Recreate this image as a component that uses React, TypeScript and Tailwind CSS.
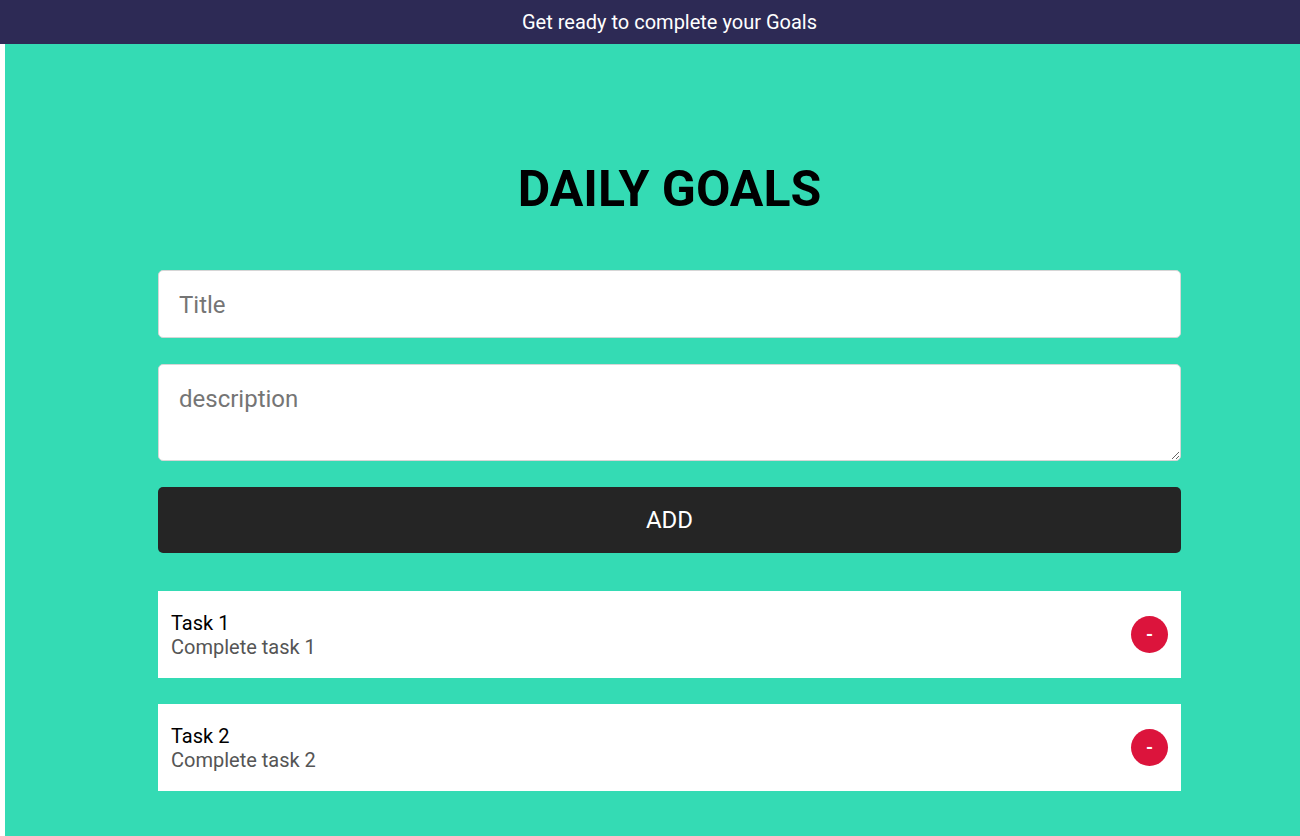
import React, { useState } from 'react'

type Task = { id: number; title: string; description: string }

const font = { fontFamily: 'Roboto, "Liberation Sans", sans-serif' }

function TaskCard({ task, onRemove }: { task: Task; onRemove: (id: number) => void }) {
  return (
    <div className="flex items-center justify-between bg-white h-[87px] pl-[13px] pr-[13px]">
      <div className="flex flex-col">
        <span className="text-[20px] leading-[24px] text-black">{task.title}</span>
        <span className="text-[20px] leading-[24px] text-[#555555]">{task.description}</span>
      </div>
      <button
        onClick={() => onRemove(task.id)}
        className="w-[37px] h-[37px] rounded-full bg-[#dc143c] text-white text-[18px] font-bold leading-none flex items-center justify-center"
      >
        -
      </button>
    </div>
  )
}

export default function App() {
  const [tasks, setTasks] = useState<Task[]>([
    { id: 1, title: 'Task 1', description: 'Complete task 1' },
    { id: 2, title: 'Task 2', description: 'Complete task 2' },
  ])
  const [title, setTitle] = useState('')
  const [desc, setDesc] = useState('')

  const addTask = () => {
    if (!title) return
    setTasks([...tasks, { id: Date.now(), title, description: desc }])
    setTitle('')
    setDesc('')
  }

  return (
    <div style={font} className="min-h-screen bg-white">
      <header className="h-[44px] bg-[#2d2a55] flex items-center justify-center pl-[39px]">
        <span className="text-white text-[20px]">Get ready to complete your Goals</span>
      </header>

      <main className="ml-[5px] bg-[#34dbb4] min-h-[792px] pt-[113px] pb-[45px]">
        <div className="ml-[153px] w-[1023px] flex flex-col">
          <h1 className="text-center text-[50px] font-bold leading-[64px] text-black">DAILY GOALS</h1>

          <input
            value={title}
            onChange={(e) => setTitle(e.target.value)}
            placeholder="Title"
            className="mt-[49px] h-[68px] bg-white border border-[#d6d6d6] rounded-[5px] px-[20px] pt-[2px] text-[24px] text-[#333] placeholder:text-[#757575] outline-none"
          />
          <textarea
            value={desc}
            onChange={(e) => setDesc(e.target.value)}
            placeholder="description"
            className="mt-[26px] h-[97px] bg-white border border-[#d6d6d6] rounded-[5px] px-[20px] pt-[20px] text-[24px] leading-[28px] text-[#333] placeholder:text-[#757575] outline-none resize-y"
          />
          <button
            onClick={addTask}
            className="mt-[26px] h-[66px] bg-[#252525] rounded-[5px] text-white text-[24px]"
          >
            ADD
          </button>

          <div className="mt-[38px] flex flex-col gap-[26px]">
            {tasks.map((t) => (
              <TaskCard key={t.id} task={t} onRemove={(id) => setTasks(tasks.filter((x) => x.id !== id))} />
            ))}
          </div>
        </div>
      </main>
    </div>
  )
}
